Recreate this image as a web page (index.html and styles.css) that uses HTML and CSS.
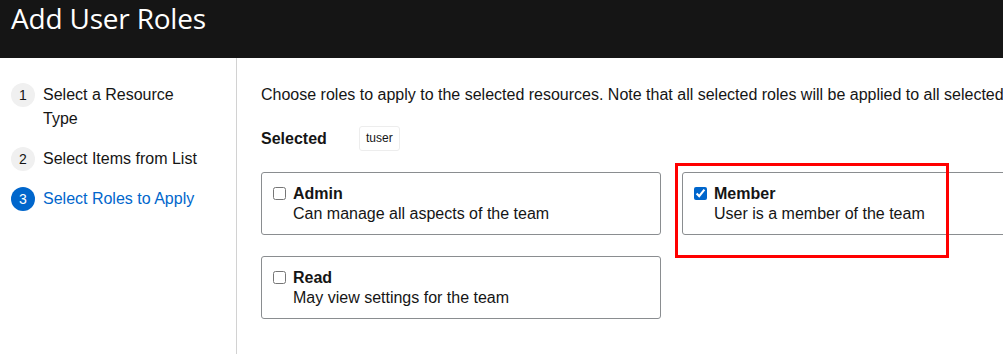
FILE: index.html
```html
<!DOCTYPE html>
<html>
<head>
<meta charset="utf-8">
<link rel="stylesheet" href="styles.css">
</head>
<body>
<header class="header"><h1 class="title">Add User Roles</h1></header>
<div class="wizard">
  <nav class="nav">
    <ol class="steps">
      <li class="step"><span class="num">1</span><span class="label">Select a Resource Type</span></li>
      <li class="step"><span class="num">2</span><span class="label">Select Items from List</span></li>
      <li class="step current"><span class="num">3</span><span class="label">Select Roles to Apply</span></li>
    </ol>
  </nav>
  <main class="main">
    <p class="intro">Choose roles to apply to the selected resources. Note that all selected roles will be applied to all selected resources.</p>
    <div class="selected"><span class="sel-label">Selected</span><span class="chip">tuser</span></div>
    <div class="cards">
      <label class="card"><input type="checkbox" class="check"><span class="card-body"><span class="card-title">Admin</span><span class="card-desc">Can manage all aspects of the team</span></span></label>
      <label class="card highlight"><input type="checkbox" class="check" checked><span class="card-body"><span class="card-title">Member</span><span class="card-desc">User is a member of the team</span></span></label>
      <label class="card"><input type="checkbox" class="check"><span class="card-body"><span class="card-title">Read</span><span class="card-desc">May view settings for the team</span></span></label>
    </div>
  </main>
</div>
</body>
</html>
```
FILE: styles.css
```css
* { box-sizing: border-box; }
html, body { margin: 0; padding: 0; }
body {
  width: 1003px;
  height: 354px;
  overflow: hidden;
  font-family: "Liberation Sans", Arial, sans-serif;
  color: #151515;
  background: #fff;
}
.header {
  background: #151515;
  height: 58px;
  padding: 0 11px;
}
.title {
  margin: 0;
  color: #fff;
  font-family: "Open Sans", sans-serif;
  font-weight: 500;
  font-size: 28px;
  line-height: 36px;
  letter-spacing: -0.2px;
}
.wizard {
  display: flex;
  height: 296px;
}
.nav {
  width: 237px;
  flex: none;
  border-right: 1px solid #d2d2d2;
  padding: 25px 11px 0 11px;
}
.steps {
  list-style: none;
  margin: 0;
  padding: 0;
  display: flex;
  flex-direction: column;
  gap: 16px;
}
.step {
  display: flex;
  align-items: flex-start;
  gap: 8px;
  font-size: 16px;
  line-height: 24px;
}
.num {
  flex: none;
  width: 24px;
  height: 24px;
  border-radius: 50%;
  background: #f0f0f0;
  font-size: 14px;
  display: flex;
  align-items: center;
  justify-content: center;
  line-height: 1;
}
.label { width: 165px; }
.current .num { background: #0066cc; color: #fff; }
.current .label { color: #0066cc; }
.main {
  padding: 25px 0 0 24px;
  flex: 1;
  min-width: 0;
  position: relative;
}
.intro {
  margin: 0;
  font-size: 16px;
  line-height: 24px;
  white-space: nowrap;
}
.selected {
  display: flex;
  align-items: center;
  margin-top: 19px;
  height: 25px;
}
.sel-label {
  font-weight: 700;
  font-size: 16px;
  width: 98px;
}
.chip {
  font-size: 12px;
  border: 1px solid #ededed;
  border-radius: 3px;
  padding: 0 6px;
  height: 25px;
  line-height: 23px;
}
.cards {
  display: grid;
  grid-template-columns: 400px 400px;
  gap: 21px;
  margin-top: 21px;
}
.card {
  display: flex;
  gap: 7px;
  border: 1px solid #8a8d90;
  border-radius: 3px;
  padding: 11px 11px 12px 11px;
  height: 63px;
}
.check {
  margin: 3px 0 0 0;
  width: 13px;
  height: 13px;
  flex: none;
  accent-color: #0066cc;
}
.card-body { display: flex; flex-direction: column; }
.card-title { font-weight: 700; font-size: 16px; line-height: 19px; }
.card-desc { font-size: 16px; line-height: 21px; }
.highlight { position: relative; }
.highlight::after {
  content: "";
  position: absolute;
  left: -8px;
  top: -10px;
  width: 268px;
  height: 89px;
  border: 3px solid #f00;
}
```
